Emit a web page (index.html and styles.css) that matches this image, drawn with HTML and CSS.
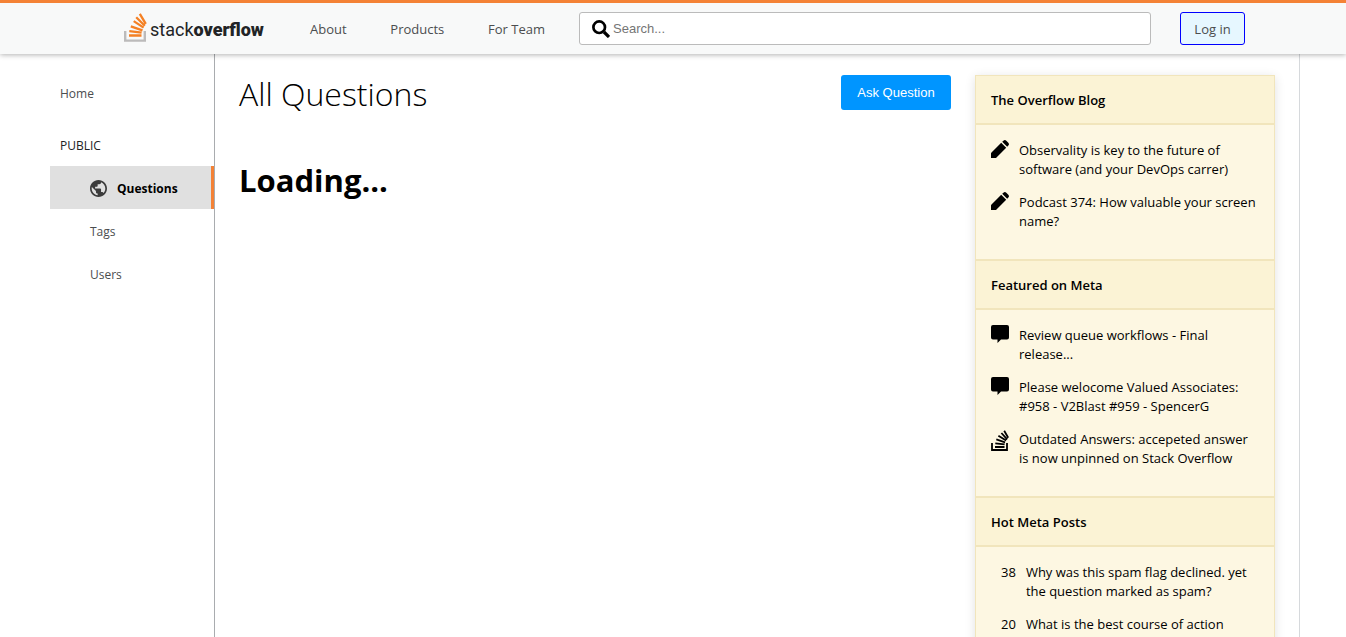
FILE: index.html
```html
<!DOCTYPE html>
<html lang="en">
<head>
<meta charset="utf-8">
<title>All Questions - Stack Overflow</title>
<meta name="viewport" content="width=device-width, initial-scale=1">
<link rel="stylesheet" href="styles.css">
</head>
<body>
<svg class="sprite" aria-hidden="true">
  <symbol id="pencil" viewBox="0 0 18 18"><path d="M0 18v-4.500Q0 13 .5 12.500L10.200 2.800l5 5L5.500 17.500Q5 18 4.500 18zM11.200 1.800L12.400.7Q13.900-.6 15.300.7L17.300 2.700Q18.600 4.200 17.300 5.600L16.200 6.800z"/></symbol>
  <symbol id="comment" viewBox="0 0 18 18"><path d="M2 0h14a2 2 0 0 1 2 2v10.500a2 2 0 0 1-2 2h-6L6.500 18v-3.500H2a2 2 0 0 1-2-2V2a2 2 0 0 1 2-2z"/></symbol>
  <symbol id="stack" viewBox="0 0 18 22"><path d="M1 14v7h15v-7M4 18h9.500M4.300 14.300l9.300 1.100M5.300 10.400l8.800 3M7.400 6.800l7.700 4.800M10.400 4l5.800 6.300M13.200 1.800l4 7" fill="none" stroke="currentColor" stroke-width="1.800"/></symbol>
</svg>
<header class="topbar">
  <a class="logo" href="#" aria-label="Stack Overflow">
    <svg class="logo-mark" viewBox="0 0 24 29" aria-hidden="true">
      <path d="M1.200 18v9.600h19.600V18" fill="none" stroke="#bcbbbb" stroke-width="2.400"/>
      <path d="M5 22.500h12.500M5.300 18.200l12.300 1.500M6.800 13.300l11.700 4M9.700 8.100l9.900 6.500M12.200 4.200l8.600 8.600M15.800.8l6 10" fill="none" stroke="#f48024" stroke-width="2.300"/>
    </svg>
    <span class="logo-text">stack<b>overflow</b></span>
  </a>
  <nav class="topnav" aria-label="Main">
    <a href="#">About</a>
    <a href="#">Products</a>
    <a href="#">For Team</a>
  </nav>
  <form class="search">
    <svg viewBox="0 0 18 18" aria-hidden="true"><path d="M12 12l5 5" stroke="#000" stroke-width="3.200"/><circle cx="7.200" cy="7.200" r="5.800" fill="none" stroke="#000" stroke-width="2.700"/></svg>
    <input type="text" placeholder="Search..." aria-label="Search">
  </form>
  <button class="login" type="button">Log in</button>
</header>
<div class="page">
  <nav class="sidebar" aria-label="Sections">
    <a class="side-link" href="#">Home</a>
    <h2 class="side-title">PUBLIC</h2>
    <a class="side-link side-sub active" href="#">
      <svg viewBox="2 2 20 20" aria-hidden="true"><path d="M12 2C6.480 2 2 6.480 2 12s4.480 10 10 10 10-4.480 10-10S17.520 2 12 2zm-1 17.930c-3.950-.49-7-3.850-7-7.930 0-.62.080-1.210.210-1.790L9 15v1c0 1.100.9 2 2 2v1.930zm6.900-2.540c-.26-.81-1-1.390-1.900-1.390h-1v-3c0-.55-.45-1-1-1H8v-2h2c.55 0 1-.45 1-1V7h2c1.100 0 2-.9 2-2v-.41c2.930 1.190 5 4.060 5 7.410 0 2.080-.8 3.970-2.100 5.390z" fill="#3c3c3c"/></svg>
      Questions
    </a>
    <a class="side-link side-sub" href="#">Tags</a>
    <a class="side-link side-sub" href="#">Users</a>
  </nav>
  <main class="content">
    <section class="questions">
      <div class="questions-head">
        <h1>All Questions</h1>
        <button class="ask" type="button">Ask Question</button>
      </div>
      <p class="loading">Loading...</p>
    </section>
    <aside class="widget">
      <h3>The Overflow Blog</h3>
      <ul>
        <li><svg class="icon"><use href="#pencil"/></svg><span>Observality is key to the future of software (and your DevOps carrer)</span></li>
        <li><svg class="icon"><use href="#pencil"/></svg><span>Podcast 374: How valuable your screen name?</span></li>
      </ul>
      <h3>Featured on Meta</h3>
      <ul>
        <li><svg class="icon"><use href="#comment"/></svg><span>Review queue workflows - Final release...</span></li>
        <li><svg class="icon"><use href="#comment"/></svg><span>Please welocome Valued Associates: #958 - V2Blast #959 - SpencerG</span></li>
        <li><svg class="icon icon-tall"><use href="#stack"/></svg><span>Outdated Answers: accepeted answer is now unpinned on Stack Overflow</span></li>
      </ul>
      <h3>Hot Meta Posts</h3>
      <ul class="hot">
        <li><span class="score">38</span><span>Why was this spam flag declined. yet the question marked as spam?</span></li>
        <li><span class="score">20</span><span>What is the best course of action</span></li>
      </ul>
    </aside>
  </main>
</div>
</body>
</html>
```
FILE: styles.css
```css
* { box-sizing: border-box; }
body {
  margin: 0;
  height: 100vh;
  display: flex;
  flex-direction: column;
  overflow: hidden;
  background: #fff;
  color: #000;
  font: 13px/19px "Segoe UI", "Open Sans", "Noto Sans", sans-serif;
}
h1, h2, h3, p, ul { margin: 0; padding: 0; }
ul { list-style: none; }
a { color: inherit; text-decoration: none; }
button { font: inherit; cursor: pointer; }
.sprite { display: none; }

.topbar {
  position: relative;
  z-index: 1;
  flex: none;
  display: flex;
  align-items: center;
  height: 54px;
  padding: 0 101px 0 124px;
  border-top: 3px solid #f48236;
  background: #f8f9f9;
  box-shadow: 0 1px 5px rgba(0, 0, 0, .3);
}
.logo {
  flex: none;
  display: flex;
  align-items: center;
  gap: 2px;
  width: 140px;
  padding-bottom: 2px;
}
.logo-mark { flex: none; width: 24px; height: 29px; }
.logo-text {
  color: #222426;
  font: 400 18px/24px Roboto, sans-serif;
  padding-top: 4px;
}
.logo-text b { font-weight: 900; }
.topnav {
  flex: none;
  display: flex;
  justify-content: space-between;
  width: 235px;
  margin: 2px 34px 0 46px;
  color: #4b4d4f;
  font-weight: 500;
  white-space: nowrap;
}
.search {
  flex: 1;
  display: flex;
  align-items: center;
  height: 33px;
  padding-left: 12px;
  border: 1px solid #bbb;
  border-radius: 3px;
  background: #fff;
}
.search svg { flex: none; width: 18px; height: 18px; }
.search input {
  flex: 1;
  min-width: 0;
  padding: 0 3px;
  border: 0;
  outline: 0;
  background: none;
  font: 13px/19px "Liberation Sans", Arial, sans-serif;
}
.search input::placeholder { color: #757575; }
.login {
  height: 33px;
  margin-left: 29px;
  width: 65px;
  padding: 2px 0 0;
  border: 1px solid #00f;
  border-radius: 3px;
  background: #e6f7ff;
  color: #4b4d4f;
  font-weight: 500;
}

.page { flex: 1; display: flex; min-height: 0; padding: 0 46px 0 50px; }
.sidebar {
  flex: none;
  width: 165px;
  padding-top: 17px;
  border-right: 1px solid #a9acaf;
}
.side-link {
  display: flex;
  align-items: center;
  height: 43px;
  padding: 1px 10px 0;
  color: #4b4d4f;
  font-size: 12px;
}
.side-title {
  margin: 22px 0 11px;
  padding-left: 10px;
  color: #222;
  font-size: 12px;
  line-height: 19px;
  font-weight: 400;
}
.side-sub { padding-left: 40px; }
.active {
  gap: 10px;
  border-right: 3px solid #f48236;
  background: #e0e0e0;
  color: #000;
  font-weight: 700;
}
.active svg { width: 17px; height: 17px; }

.content {
  flex: 1;
  display: flex;
  align-items: flex-start;
  gap: 24px;
  min-width: 0;
  padding: 21px 24px 0;
  border-right: 1px solid #d6d9dc;
}
.questions { flex: 1; }
.questions-head { display: flex; align-items: flex-start; justify-content: space-between; }
h1 { font-size: 32px; line-height: 38px; font-weight: 300; }
.ask {
  width: 110px;
  height: 35px;
  padding: 0;
  border: 0;
  border-radius: 3px;
  background: #0095ff;
  color: #fff;
  font: 13px/19px "Liberation Sans", Arial, sans-serif;
}
.loading { margin-top: 47px; font-size: 31px; line-height: 40px; font-weight: 700; }

.widget {
  flex: none;
  width: 300px;
  border: 1px solid #f1e5bc;
  background: #fdf7e2;
  box-shadow: 0 2px 10px rgba(0, 0, 0, .12);
}
.widget h3 {
  padding: 16px 15px 14px;
  border-bottom: 2px solid #f1e5bc;
  background: #fbf3d5;
  font-size: 13px;
  line-height: 17px;
  font-weight: 600;
}
.widget ul + h3 { border-top: 2px solid #f1e5bc; }
.widget ul { display: grid; gap: 13px; padding: 15px 15px 28px; }
.widget li { display: flex; gap: 10px; }
.widget li span { padding-top: 1px; }
.icon { flex: none; width: 18px; height: 18px; }
.icon-tall { height: 22px; }
.hot li { padding-left: 10px; }
```
